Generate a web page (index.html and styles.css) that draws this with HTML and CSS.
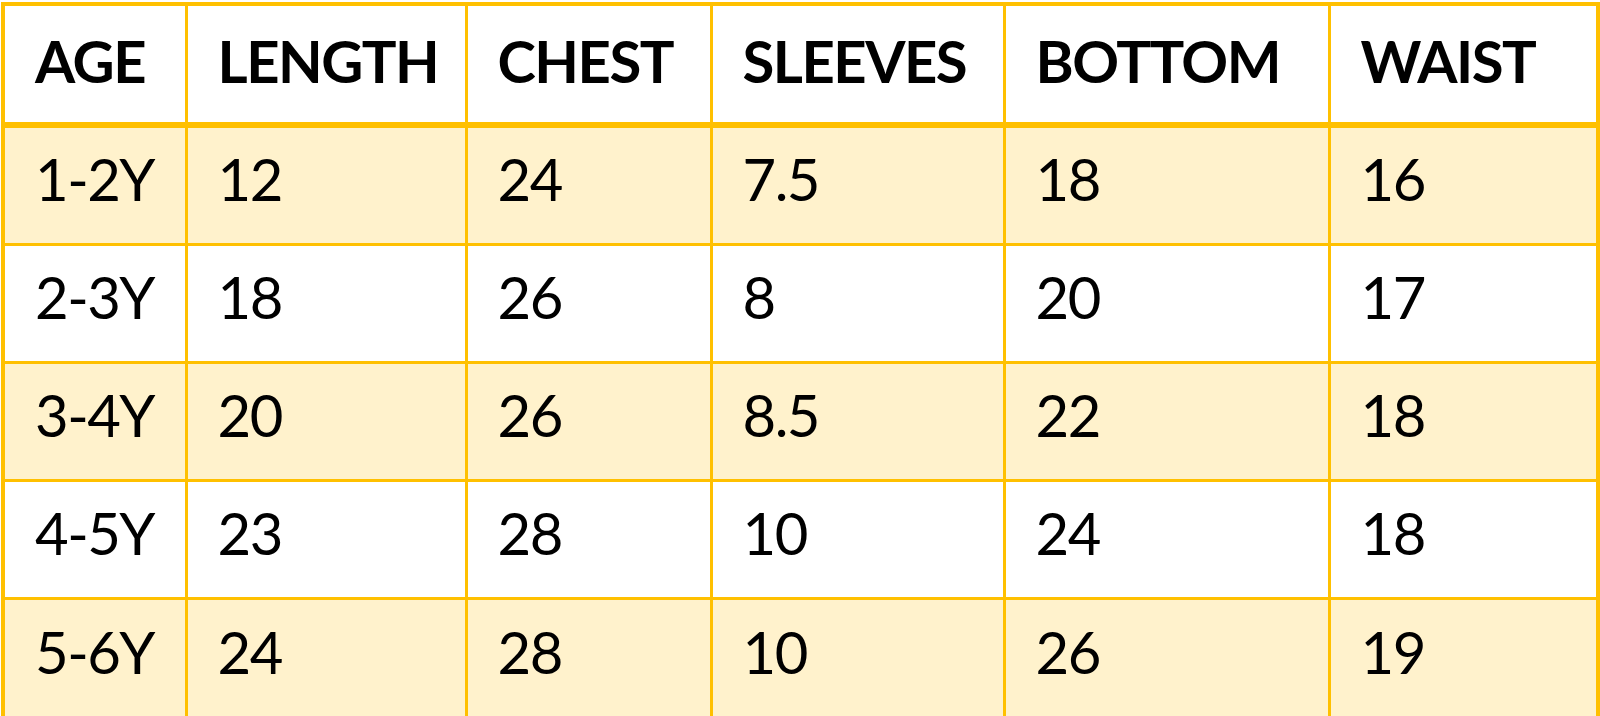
FILE: index.html
```html
<!DOCTYPE html>
<html>
<head>
<meta charset="utf-8">
<link rel="stylesheet" href="styles.css">
<title>Size chart</title>
</head>
<body>
<table class="size-table">
  <colgroup>
    <col class="c-age">
    <col class="c-length">
    <col class="c-chest">
    <col class="c-sleeves">
    <col class="c-bottom">
    <col class="c-waist">
  </colgroup>
  <thead>
    <tr>
      <th>AGE</th><th>LENGTH</th><th>CHEST</th><th>SLEEVES</th><th>BOTTOM</th><th>WAIST</th>
    </tr>
  </thead>
  <tbody>
    <tr class="band"><td>1-2Y</td><td>12</td><td>24</td><td>7.5</td><td>18</td><td>16</td></tr>
    <tr><td>2-3Y</td><td>18</td><td>26</td><td>8</td><td>20</td><td>17</td></tr>
    <tr class="band"><td>3-4Y</td><td>20</td><td>26</td><td>8.5</td><td>22</td><td>18</td></tr>
    <tr><td>4-5Y</td><td>23</td><td>28</td><td>10</td><td>24</td><td>18</td></tr>
    <tr class="band last"><td>5-6Y</td><td>24</td><td>28</td><td>10</td><td>26</td><td>19</td></tr>
  </tbody>
</table>
</body>
</html>
```

FILE: styles.css
```css
html, body {
  margin: 0;
  padding: 0;
  background: #ffffff;
  overflow: hidden;
}

.size-table {
  margin: 2px 0 0 1px;
  width: 1595px;
  table-layout: fixed;
  border-collapse: collapse;
  font-family: Lato, "Open Sans", sans-serif;
  color: #000000;
}

.c-age { width: 183px; }
.c-length { width: 280px; }
.c-chest { width: 245px; }
.c-sleeves { width: 293px; }
.c-bottom { width: 325px; }
.c-waist { width: 269px; }

.size-table th,
.size-table td {
  border: 3px solid #FFC000;
  text-align: left;
  padding: 0 0 8px 30px;
  white-space: nowrap;
}

.size-table th {
  height: 108px;
  font-size: 58px;
  font-weight: 700;
  border-top-width: 4px;
  border-bottom-width: 6px;
  letter-spacing: -1.5px;
  background: #ffffff;
}

.size-table td {
  height: 101px;
  padding-bottom: 14px;
  font-size: 58px;
  font-weight: 400;
  letter-spacing: -1.5px;
}

.size-table tr.last td {
  height: 102px;
  border-bottom-width: 0;
}

.size-table tr > :first-child { border-left-width: 4px; }
.size-table tr > :last-child { border-right-width: 4px; }

.size-table tr.band td {
  background: #FFF2CC;
}
```
